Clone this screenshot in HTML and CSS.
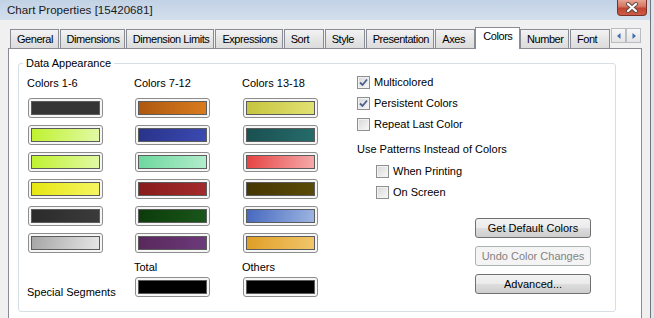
FILE: index.html
```html
<!DOCTYPE html>
<html lang="en">
<head>
    <meta charset="UTF-8">
    <title>Chart Properties</title>
    <link rel="stylesheet" href="styles.css">
</head>
<body>
    <div class="window">
        <div class="titlebar">
            <span class="title">Chart Properties [15420681]</span>
            <span class="close-btn">
                <svg width="14" height="11" viewBox="0 0 14 11">
                    <path d="M3 2 L11 9 M11 2 L3 9" stroke="#5a4a48" stroke-width="4" stroke-linecap="round"/>
                    <path d="M3 2 L11 9 M11 2 L3 9" stroke="#ffffff" stroke-width="2.2" stroke-linecap="round"/>
                </svg>
            </span>
        </div>

        <div class="dialog-body">
            <div class="tabs">
                <span class="tab">General</span>
                <span class="tab">Dimensions</span>
                <span class="tab">Dimension Limits</span>
                <span class="tab">Expressions</span>
                <span class="tab">Sort</span>
                <span class="tab">Style</span>
                <span class="tab">Presentation</span>
                <span class="tab">Axes</span>
                <span class="tab active">Colors</span>
                <span class="tab">Number</span>
                <span class="tab">Font</span>
                <span class="tab-scroll">
                    <span class="scroll-btn"><svg width="4" height="6" viewBox="0 0 4 6"><path d="M3.5 0 L0 3 L3.5 6 Z" fill="#3f6db5"/></svg></span>
                    <span class="scroll-btn"><svg width="4" height="6" viewBox="0 0 4 6"><path d="M0.5 0 L4 3 L0.5 6 Z" fill="#3f6db5"/></svg></span>
                </span>
            </div>

            <div class="tab-panel">
                <fieldset class="group">
                    <legend>Data Appearance</legend>
                    <div class="group-inner">
                        <div class="swatch-cols">
                            <div class="swatch-col">
                                <div class="col-label">Colors 1-6</div>
                                <div class="swatch"><span class="c1"></span></div>
                                <div class="swatch"><span class="c2"></span></div>
                                <div class="swatch"><span class="c3"></span></div>
                                <div class="swatch"><span class="c4"></span></div>
                                <div class="swatch"><span class="c5"></span></div>
                                <div class="swatch"><span class="c6"></span></div>
                                <div class="special-label">Special Segments</div>
                            </div>
                            <div class="swatch-col">
                                <div class="col-label">Colors 7-12</div>
                                <div class="swatch"><span class="c7"></span></div>
                                <div class="swatch"><span class="c8"></span></div>
                                <div class="swatch"><span class="c9"></span></div>
                                <div class="swatch"><span class="c10"></span></div>
                                <div class="swatch"><span class="c11"></span></div>
                                <div class="swatch"><span class="c12"></span></div>
                                <div class="sub-label">Total</div>
                                <div class="swatch"><span class="black"></span></div>
                            </div>
                            <div class="swatch-col">
                                <div class="col-label">Colors 13-18</div>
                                <div class="swatch"><span class="c13"></span></div>
                                <div class="swatch"><span class="c14"></span></div>
                                <div class="swatch"><span class="c15"></span></div>
                                <div class="swatch"><span class="c16"></span></div>
                                <div class="swatch"><span class="c17"></span></div>
                                <div class="swatch"><span class="c18"></span></div>
                                <div class="sub-label">Others</div>
                                <div class="swatch"><span class="black"></span></div>
                            </div>
                        </div>

                        <div class="options">
                            <label class="check-row"><span class="checkbox checked"><svg width="9" height="9" viewBox="0 0 9 9"><path d="M1 4.5 L3.5 7 L8 1.5" stroke="#4b5f8e" stroke-width="1.8" fill="none"/></svg></span>Multicolored</label>
                            <label class="check-row"><span class="checkbox checked"><svg width="9" height="9" viewBox="0 0 9 9"><path d="M1 4.5 L3.5 7 L8 1.5" stroke="#4b5f8e" stroke-width="1.8" fill="none"/></svg></span>Persistent Colors</label>
                            <label class="check-row"><span class="checkbox"></span>Repeat Last Color</label>
                            <div class="pattern-title">Use Patterns Instead of Colors</div>
                            <label class="check-row indent first-indent"><span class="checkbox"></span>When Printing</label>
                            <label class="check-row indent"><span class="checkbox"></span>On Screen</label>

                            <div class="buttons">
                                <span class="btn">Get Default Colors</span>
                                <span class="btn disabled">Undo Color Changes</span>
                                <span class="btn">Advanced...</span>
                            </div>
                        </div>
                    </div>
                </fieldset>
            </div>
        </div>
    </div>
</body>
</html>
```

FILE: styles.css
```css
html, body {
    margin: 0;
    height: 318px;
    overflow: hidden;
}

body {
    background: #dde5ee;
    font-family: 'Liberation Sans', Arial, sans-serif;
    font-size: 11px;
    color: #000000;
}

.window {
    width: 650px;
    height: 318px;
    display: flex;
    flex-direction: column;
    background: #f0f0f0;
    border-right: 1px solid #6f7479;
}

/* title bar */
.titlebar {
    height: 20px;
    flex: none;
    display: flex;
    align-items: flex-start;
    background: linear-gradient(#c2d2e5, #d3dfed);
}

.title {
    padding-left: 7px;
    line-height: 20px;
    font-size: 11.6px;
    color: #1b1b1b;
}

.close-btn {
    margin-left: auto;
    margin-right: 3px;
    width: 30px;
    height: 16px;
    box-sizing: border-box;
    border: 1px solid #7b3128;
    border-top: none;
    border-radius: 0 0 4px 4px;
    background: linear-gradient(#e8a493, #d27360 45%, #c0432e 55%, #cd5e47);
    display: flex;
    align-items: center;
    justify-content: center;
}

/* tabs */
.dialog-body {
    flex: 1;
    min-height: 0;
    display: flex;
    flex-direction: column;
    padding: 7px 8px 0 8px;
}

.tabs {
    display: flex;
    align-items: flex-end;
    height: 21px;
    padding-left: 2px;
    flex: none;
}

.tab {
    box-sizing: border-box;
    min-width: 40px;
    height: 19px;
    line-height: 18px;
    padding: 0 5px 0 6px;
    margin-right: 1px;
    border: 1px solid #898c95;
    border-bottom: none;
    background: linear-gradient(#f3f3f3, #e6e6e6 50%, #dcdcdc);
    letter-spacing: -0.45px;
    white-space: nowrap;
}

.tab.active {
    position: relative;
    z-index: 1;
    height: 22px;
    line-height: 16px;
    margin: 0 0 -1px -1px;
    padding: 0 7px 5px;
    background: #ffffff;
}

.tab-scroll {
    display: flex;
    align-self: flex-start;
    margin: 1px 1px 0 auto;
}

.scroll-btn {
    width: 15px;
    height: 15px;
    box-sizing: border-box;
    border: 1px solid #b9bcc1;
    background: linear-gradient(#f7f7f7, #e4e4e4);
    display: flex;
    align-items: center;
    justify-content: center;
}

.tab-panel {
    flex: 1;
    background: #ffffff;
    border: 1px solid #898c95;
    border-bottom: none;
    padding: 7px 25px 0 9px;
}

/* group box */
.group {
    margin: 0;
    min-width: 0;
    border: 1px solid #d5dfe5;
    border-radius: 3px;
    padding: 5px 0 12px 8px;
}

.group legend {
    padding: 0 3px;
    margin-left: -4px;
    line-height: 14px;
}

.group-inner {
    display: flex;
}

.swatch-cols {
    display: grid;
    grid-template-columns: 107px 108px 76px;
}

.swatch-col {
    display: flex;
    flex-direction: column;
    gap: 7px;
}

.col-label {
    line-height: 16px;
}

.sub-label {
    line-height: 14px;
    margin-bottom: -4px;
}

.special-label {
    line-height: 14px;
    margin-top: 25px;
}

.swatch {
    width: 75px;
    height: 20px;
    box-sizing: border-box;
    margin-left: 1px;
    padding: 2px;
    border: 1px solid #8d8d8d;
    border-radius: 3px;
    background: #f6f6f6;
}

.swatch span {
    display: block;
    height: 100%;
    box-sizing: border-box;
    border: 1px solid #5c5c5c;
}

.c1 { background: #353535; }
.c2, .c3 { background: linear-gradient(100deg, #bff22f, #e2f9a6); }
.c4 { background: linear-gradient(100deg, #e6e612, #f5f563); }
.c5 { background: linear-gradient(100deg, #2b2b2b, #3b3b3b); }
.c6 { background: linear-gradient(100deg, #a6a6a6, #e6e6e6); }
.c7 { background: linear-gradient(100deg, #ad5810, #da7b1d); }
.c8 { background: linear-gradient(100deg, #29338a, #3b4ab2); }
.c9 { background: linear-gradient(100deg, #6dd79e, #b2edcc); }
.c10 { background: linear-gradient(100deg, #881b1b, #a42b2b); }
.c11 { background: linear-gradient(100deg, #0c3b0c, #195619); }
.c12 { background: linear-gradient(100deg, #58285c, #6c3a7a); }
.c13 { background: linear-gradient(100deg, #c6c53e, #e1e173); }
.c14 { background: linear-gradient(100deg, #1a5050, #266b6b); }
.c15 { background: linear-gradient(100deg, #e64242, #f5abab); }
.c16 { background: linear-gradient(100deg, #443700, #5b4b09); }
.c17 { background: linear-gradient(100deg, #4768bf, #9cb5e1); }
.c18 { background: linear-gradient(100deg, #df9e26, #f1c66b); }
.black { background: #000000; }

/* options column */
.options {
    margin-left: 39px;
    flex: 1;
    display: flex;
    flex-direction: column;
    gap: 7px;
}

.check-row {
    display: flex;
    align-items: center;
    gap: 4px;
    line-height: 14px;
}

.checkbox {
    width: 13px;
    height: 13px;
    box-sizing: border-box;
    border: 1px solid #8e8f8f;
    background: linear-gradient(135deg, #d8d8d8, #f8f8f8);
    box-shadow: inset 0 0 0 1px #f2f2f2;
    display: flex;
    align-items: center;
    justify-content: center;
}

.pattern-title {
    margin-top: 4px;
    line-height: 14px;
}

.indent {
    margin-left: 19px;
}

.first-indent {
    margin-top: 1px;
}

.buttons {
    display: flex;
    flex-direction: column;
    gap: 8px;
    margin: 12px 0 0 118px;
}

.btn {
    width: 116px;
    height: 20px;
    box-sizing: border-box;
    border: 1px solid #707070;
    border-radius: 3px;
    background: linear-gradient(#f2f2f2 0%, #ebebeb 50%, #dddddd 50%, #cfcfcf 100%);
    text-align: center;
    line-height: 18px;
}

.btn.disabled {
    border-color: #adb2b5;
    background: #f4f4f4;
    color: #838383;
}
```
